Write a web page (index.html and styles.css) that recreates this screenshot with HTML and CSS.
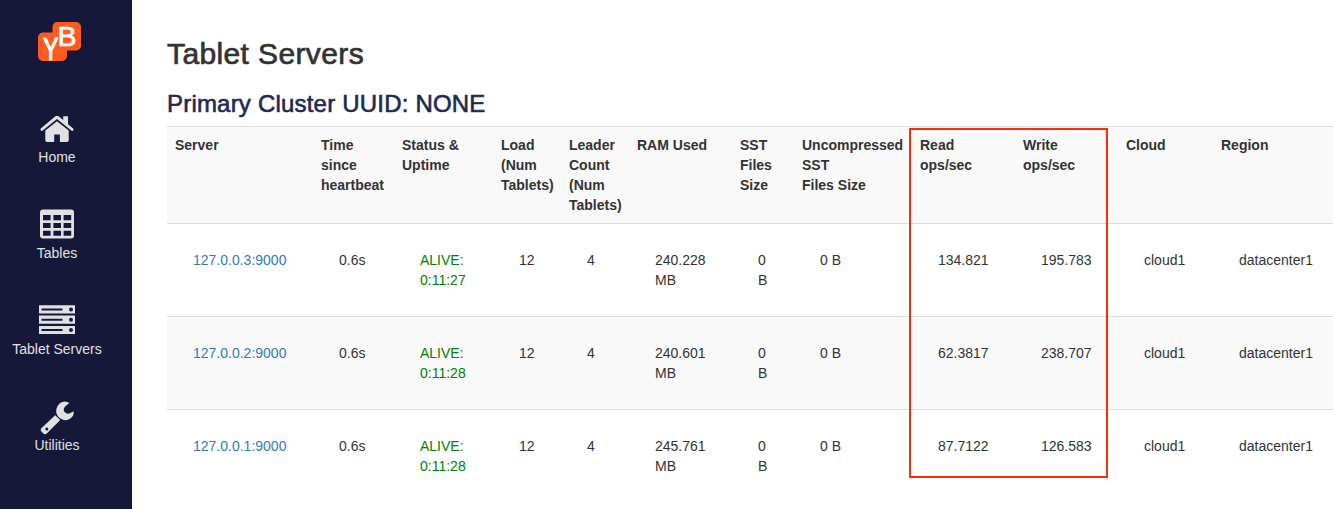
FILE: index.html
```
<!DOCTYPE html>
<html lang="en">
<head>
<meta charset="utf-8">
<title>Tablet Servers</title>
<link rel="stylesheet" href="styles.css">
</head>
<body>
<nav class="sidebar">
  <svg class="logo" width="44" height="48" viewBox="0 0 44 48">
    <rect class="logo-tile" x="0" y="10.5" width="29" height="28.5" rx="5"/>
    <rect class="logo-tile" x="14.5" y="0" width="28.5" height="28.5" rx="5"/>
    <text class="logo-y" x="5" y="38" textLength="15.5" lengthAdjust="spacingAndGlyphs">Y</text>
    <text class="logo-b" x="19.5" y="24" textLength="19" lengthAdjust="spacingAndGlyphs">B</text>
  </svg>
  <a class="nav-item" href="#">
    <svg width="38" height="32" viewBox="0 0 38 32">
      <path d="M2.8 16.5 17.4 4.3q1.6-1.3 3.2 0l4.6 3.8V4.2H30v8l5.2 4.3q.9 1.3-.2 2.2-.8.5-1.7-.1L19 6.9 4.7 18.6q-1 .6-1.8-.1-1-1-.1-2z"/>
      <path d="M7.3 18.6 19 9.2l11.7 9.4v9.7q0 1.7-1.8 1.7h-7v-7.5h-5.7V30H9.1q-1.8 0-1.8-1.7z"/>
    </svg>
    <span>Home</span>
  </a>
  <a class="nav-item" href="#">
    <svg width="38" height="32" viewBox="0 0 38 32">
      <path fill-rule="evenodd" d="M5 1.5h28q3 0 3 3v23q0 3-3 3H5q-3 0-3-3v-23q0-3 3-3zM5 7v5.2h7.6V7zm10.4 0v5.2H23V7zm10.2 0v5.2h7.6V7zM5 14.9v5.1h7.6v-5.1zm10.4 0v5.1H23v-5.1zm10.2 0v5.1h7.6v-5.1zM5 22.8v4.9h7.6v-4.9zm10.4 0v4.9H23v-4.9zm10.2 0v4.9h7.6v-4.9z"/>
    </svg>
    <span>Tables</span>
  </a>
  <a class="nav-item" href="#">
    <svg width="38" height="32" viewBox="0 0 38 32">
      <path d="M1 1.3h36v8.2H1zm0 10.3h36v8.2H1zm0 10.3h36v8.2H1z"/>
      <path class="cutout" d="M3.5 4.4h21v2h-21zm0 10.3h21v2h-21zm0 10.3h21v2h-21z"/>
      <circle class="cutout" cx="33" cy="5.4" r="2"/><circle class="cutout" cx="33" cy="15.7" r="2"/><circle class="cutout" cx="33" cy="26" r="2"/>
    </svg>
    <span>Tablet Servers</span>
  </a>
  <a class="nav-item" href="#">
    <svg width="38" height="36" viewBox="0 0 38 36">
      <path d="M31.3 3 27.4 6.2q-3 3.2-.6 6.1 2.6 2.5 5.6.6l3.2-1.6q.7 4.3-2.9 7-5 3.6-10.3.3-5.2-3.9-4-9.6Q20 2.3 26.6 1.5q2.8-.1 4.7 1.5z"/>
      <path d="m17.2 15.2 5 4.8L8.8 33.6q-1.7 1.5-3.4 0l-2-2q-1.5-1.7 0-3.3z"/>
      <circle class="cutout" cx="8.8" cy="28.9" r="1.5"/>
    </svg>
    <span>Utilities</span>
  </a>
</nav>
<main class="content">
  <h1>Tablet Servers</h1>
  <h2>Primary Cluster UUID: NONE</h2>
  <table class="servers">
    <colgroup>
      <col class="w-server"><col class="w-time"><col class="w-status"><col class="w-count"><col class="w-count"><col class="w-wide"><col class="w-sst"><col class="w-raw"><col class="w-wide"><col class="w-wide"><col class="w-cloud"><col class="w-region">
    </colgroup>
    <thead>
      <tr><th>Server</th><th>Time<br>since<br>heartbeat</th><th>Status &amp;<br>Uptime</th><th>Load<br>(Num<br>Tablets)</th><th>Leader<br>Count<br>(Num<br>Tablets)</th><th>RAM Used</th><th>SST<br>Files<br>Size</th><th>Uncompressed<br>SST<br>Files Size</th><th>Read<br>ops/sec</th><th>Write<br>ops/sec</th><th>Cloud</th><th>Region</th></tr>
    </thead>
    <tbody>
      <tr><td><a href="#">127.0.0.3:9000</a></td><td>0.6s</td><td class="alive">ALIVE:<br>0:11:27</td><td>12</td><td>4</td><td>240.228<br>MB</td><td>0<br>B</td><td>0 B</td><td>134.821</td><td>195.783</td><td>cloud1</td><td>datacenter1</td></tr>
      <tr><td><a href="#">127.0.0.2:9000</a></td><td>0.6s</td><td class="alive">ALIVE:<br>0:11:28</td><td>12</td><td>4</td><td>240.601<br>MB</td><td>0<br>B</td><td>0 B</td><td>62.3817</td><td>238.707</td><td>cloud1</td><td>datacenter1</td></tr>
      <tr><td><a href="#">127.0.0.1:9000</a></td><td>0.6s</td><td class="alive">ALIVE:<br>0:11:28</td><td>12</td><td>4</td><td>245.761<br>MB</td><td>0<br>B</td><td>0 B</td><td>87.7122</td><td>126.583</td><td>cloud1</td><td>datacenter1</td></tr>
    </tbody>
  </table>
  <div class="highlight"></div>
</main>
</body>
</html>
```
FILE: styles.css
```
* { box-sizing: border-box; }
body {
  margin: 0;
  height: 509px;
  display: flex;
  overflow: hidden;
  background: #fff;
  color: #333;
  font: 14px/20px "Liberation Sans", Arial, sans-serif;
}
a { color: #337ab7; text-decoration: none; }

.sidebar {
  flex: none;
  width: 132px;
  padding: 22px 18px 0 0;
  display: flex;
  flex-direction: column;
  align-items: center;
  background: #151838;
}
.logo { flex: none; margin: 0 0 42px 5px; }
.logo-tile { fill: #ff5a1f; }
.logo-y, .logo-b { font-family: "Liberation Sans", Arial, sans-serif; fill: #fff; stroke: #fff; }
.logo-y { font-size: 31px; stroke-width: 1.2px; }
.logo-b { font-size: 28px; stroke-width: .7px; }
.nav-item {
  height: 96px;
  display: flex;
  flex-direction: column;
  align-items: center;
  color: #e1e1e3;
  white-space: nowrap;
}
.nav-item svg { flex: none; fill: #e1e1e3; margin-bottom: 3px; }
.nav-item:last-child svg { margin-bottom: -1px; }
.nav-item .cutout { fill: #151838; }

.content { position: relative; flex: 1; min-width: 0; padding: 37px 0 0 35px; }
h1, h2 { margin: 0; font-weight: 400; white-space: nowrap; }
h1 { font-size: 30px; line-height: 33px; letter-spacing: .38px; -webkit-text-stroke: .7px #333; }
h2 { margin: 21px 0 9px; font-size: 24px; line-height: 26px; letter-spacing: .2px; color: #202951; -webkit-text-stroke: .6px #202951; }

.servers { width: 1183px; table-layout: fixed; border-collapse: separate; border-spacing: 0; }
.servers th { padding: 8px; text-align: left; vertical-align: top; border-top: 1px solid #ddd; white-space: nowrap; }
.servers td { padding: 26px 0 26px 26px; vertical-align: top; border-top: 1px solid #ddd; white-space: nowrap; }
.servers thead tr, .servers tbody tr:nth-child(even) { background: #f9f9f9; }
.servers .alive { color: #008000; }
.w-server { width: 146px; }
.w-time { width: 81px; }
.w-status { width: 99px; }
.w-count { width: 68px; }
.w-wide { width: 103px; }
.w-sst { width: 62px; }
.w-raw { width: 118px; }
.w-cloud { width: 95px; }
.w-region { width: 137px; }

.highlight { position: absolute; left: 777px; top: 128px; width: 199px; height: 350px; border: 2px solid #fc2b0c; }
```
